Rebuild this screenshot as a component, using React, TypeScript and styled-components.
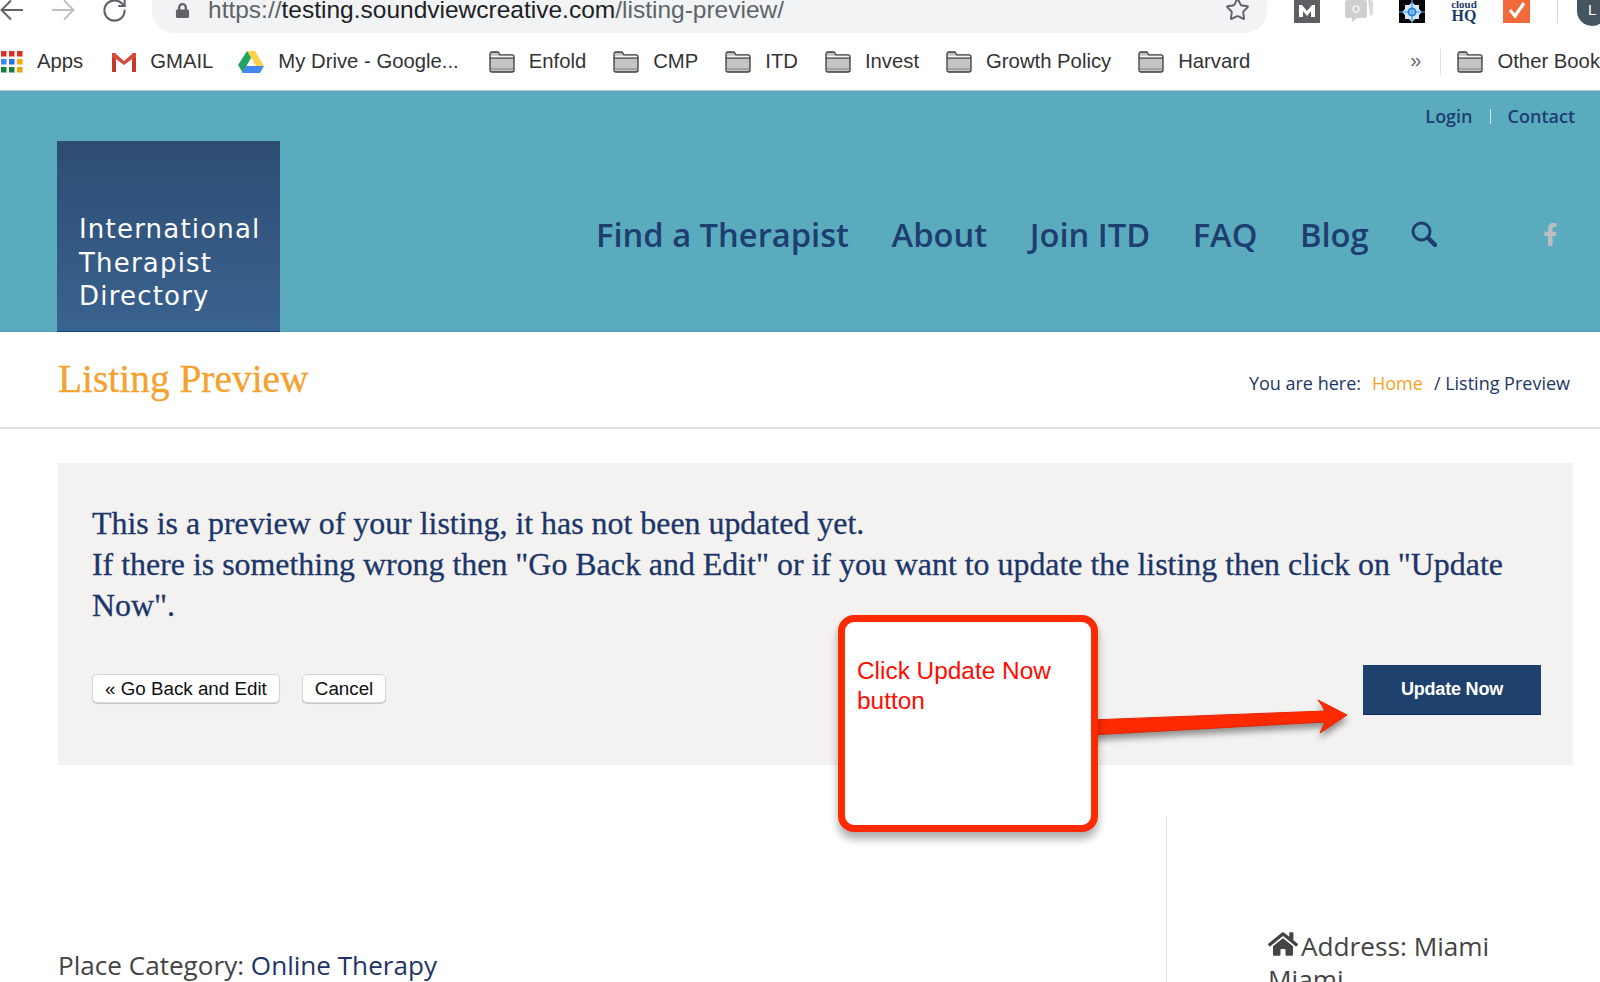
import React from 'react';
import styled, { createGlobalStyle } from 'styled-components';
import { RotateCw, Star } from 'lucide-react';
import { FaHome, FaFacebookF, FaLock } from 'react-icons/fa';

const Global = createGlobalStyle`
  html, body { margin: 0; padding: 0; background: #fff; height: 982px; overflow: hidden; }
  * { box-sizing: border-box; }
`;
const Page = styled.div`
  position: relative; width: 1600px; height: 982px; overflow: hidden; background: #fff;
  font-family: "Open Sans", sans-serif;
`;
const Toolbar = styled.div`
  height: 33px; display: flex; align-items: flex-end; overflow: hidden; position: relative;
`;
const NavIcons = styled.div`
  width: 152px; height: 33px; padding: 0 0 13px 0; display: flex; align-items: center; gap: 29px; color: #5f6368; flex: none;
  svg { flex: none; }
`;
const Pill = styled.div`
  width: 1115px; height: 44px; background: #f1f3f4; border-radius: 0 0 22px 22px; flex: none;
  display: flex; align-items: flex-end; padding: 0 17px 10px 23px; color: #5f6368;
  font-family: "Liberation Sans", sans-serif; font-size: 24.5px; line-height: 27px;
`;
const UrlText = styled.div`
  margin-left: 18px; flex: 1; white-space: nowrap; color: #5f6368;
  b { font-weight: 400; color: #202124; }
`;
const Extensions = styled.div`
  display: flex; align-items: flex-start; height: 33px; margin-left: 27px; padding-top: 0; flex: none;
`;
const ExtSlot = styled.div<{ $w: number }>`
  width: ${p => p.$w}px; flex: none; height: 24px; display: flex; align-items: flex-start;
`;
const CloudHq = styled.div`
  font-family: "Liberation Serif", serif; font-weight: 700; color: #1b3a66; text-align: center; width: 28px;
  font-size: 11px; line-height: 8px;
  span { display: block; font-size: 16px; line-height: 15px; }
`;
const ToolSep = styled.div`
  width: 1px; height: 23px; background: #d5d5d5; flex: none; margin-right: 19px;
`;
const Avatar = styled.div`
  width: 30px; height: 26px; border-radius: 0 0 15px 15px; background: #46555f; color: #fff; flex: none;
  font-size: 15px; padding-left: 11px; line-height: 20px; font-family: "Liberation Sans", sans-serif;
`;
const Bookmarks = styled.div`
  height: 58px; display: flex; align-items: center; gap: 27px; padding-left: 1px; overflow: hidden; white-space: nowrap;
  border-bottom: 1px solid #b9c3c6;
  font-family: "Liberation Sans", sans-serif; font-size: 20.3px; color: #333; position: relative;
`;
const Bookmark = styled.div`
  display: flex; align-items: center; gap: 14px; flex: none;
`;
const GmailMark = styled(Bookmark)`
  margin: 0 -2px 0 2px;
`;
const DriveMark = styled(Bookmark)`
  margin-right: 3px;
`;
const BookmarkEnd = styled.div`
  margin-left: 133px; display: flex; align-items: center; flex: none; gap: 27px;
`;
const Chevrons = styled.span`
  color: #666; font-size: 20px; margin-top: -2px;
`;
const BarSep = styled.div`
  width: 1px; height: 26px; background: #e0e0e0; margin-left: -8px; margin-right: -11px;
`;
const Header = styled.header`
  height: 241px; background: #5babbf; display: flex; padding-left: 57px;
  border-bottom: 1px solid #55a1b4;
`;
const Logo = styled.div`
  width: 223px; height: 191px; margin-top: 50px; flex: none;
  background: linear-gradient(#2d4d72, #3a6290); border-bottom: 1px solid #11477e;
  padding: 72px 0 0 22px; color: #fff;
  font-family: "DejaVu Sans", sans-serif; font-size: 26px; line-height: 33.6px; letter-spacing: 1.2px;
`;
const HeaderRight = styled.div`
  flex: 1; display: flex; flex-direction: column;
`;
const TopLinks = styled.div`
  height: 50px; display: flex; align-items: center; justify-content: flex-end; padding-right: 25px;
  color: #1d3e6f; font-size: 18px; font-weight: 600; gap: 17px;
`;
const TopSep = styled.span`
  width: 1px; height: 15px; background: #d8e6ea;
`;
const Nav = styled.nav`
  height: 186px; display: flex; align-items: center; padding-left: 316px; gap: 42.5px;
  color: #1d3e6f; font-size: 32.7px; font-weight: 600; white-space: nowrap;
`;
const FbIcon = styled(FaFacebookF)`
  font-size: 23px; color: #b9bfc0; flex: none; margin-left: 59px;
`;
const TitleBar = styled.div`
  height: 97px; border-bottom: 2px solid #e4e4e4; display: flex; align-items: center; justify-content: space-between;
  padding: 0 30px 0 58px;
`;
const Title = styled.h1`
  margin: 0 0 2px; font-family: "Liberation Serif", serif; font-weight: 400; font-size: 39.4px; color: #f4a12e;
  -webkit-text-stroke: 0.3px #f4a12e;
`;
const Crumbs = styled.div`
  font-size: 18px; color: #1d3566; display: flex; gap: 11px; margin-top: 6px;
`;
const CrumbLink = styled.span`
  color: #f9a11f;
`;
const Notice = styled.section`
  margin: 34px 27px 0 58px; height: 302px; background: #f3f2f1; padding: 40px 32px 0 34px; position: relative;
`;
const NoticeText = styled.div`
  font-family: "Liberation Serif", serif; font-size: 31.9px; line-height: 41px; color: #1c3669;
  -webkit-text-stroke: 0.3px #1c3669;
`;
const NoticeActions = styled.div`
  display: flex; align-items: flex-start; margin-top: 48px;
`;
const SmallButton = styled.button`
  height: 29px; padding: 0 12px; background: #fff; border: 1px solid #d8d8d8; border-radius: 5px;
  box-shadow: 0 1px 1px rgba(0,0,0,.18); color: #111; font-family: "Liberation Sans", sans-serif; font-size: 18.8px;
  margin-right: 22px;
`;
const UpdateButton = styled.button`
  margin: -9px 0 0 auto; width: 178px; height: 50px; background: #1e406d; border: 0; border-bottom: 1px solid #0d2a66; color: #fff;
  font-family: "Liberation Sans", sans-serif; font-size: 18px; font-weight: 700; letter-spacing: -0.2px;
`;
const Lower = styled.div`
  display: grid; grid-template-columns: 1166px 1fr; margin-top: 51px; height: 200px;
`;
const LeftCol = styled.div`
  padding: 131px 0 0 58px; font-size: 26.1px; color: #444;
  a { color: #1d3566; }
`;
const RightCol = styled.div`
  border-left: 1px solid #dcdcdc; padding: 113px 100px 0 101px; font-size: 26.2px; line-height: 33px; color: #444; 
  svg { vertical-align: -3px; margin-right: 3px; }
`;
const Callout = styled.div`
  position: absolute; left: 838px; top: 615px; width: 260px; height: 217px; background: #fff; border: 7px solid #ff2a00;
  border-radius: 16px; box-shadow: 0 7px 8px rgba(0,0,0,.32); padding: 34px 10px 0 12px;
  color: #ff0c00; font-family: "Liberation Sans", sans-serif; font-size: 24.4px; line-height: 30px; z-index: 3;
`;
const ArrowSvg = styled.svg`
  position: absolute; left: 1090px; top: 690px; z-index: 2; overflow: visible;
  filter: drop-shadow(0 5px 3px rgba(0, 0, 0, 0.4));
`;
const ReloadIcon = styled(RotateCw)`
  margin-left: -3px;
`;

const Folder = () => (
  <svg width="26" height="22" viewBox="0 0 26 22">
    <path d="M1 3.5Q1 1 3 1h6l2 3h12q2 0 2 2v13q0 2-2 2H3q-2 0-2-2z" fill="#c4c4c4" stroke="#3c3c3c" strokeWidth="1.3" />
    <path d="M1 7h24" stroke="#3c3c3c" strokeWidth="1.3" />
    <path d="M2 5.5h22" stroke="#f5f5f5" strokeWidth="1.6" />
    <path d="M2 18h22" stroke="#999" strokeWidth="1.6" />
  </svg>
);
const BackArrow = () => (
  <svg width="23" height="22" viewBox="0 0 23 22" fill="none" stroke="currentColor" strokeWidth="2">
    <path d="M23 11H2M11 1.5 1.5 11l9.5 9.5" />
  </svg>
);
const ForwardArrow = () => (
  <svg width="23" height="22" viewBox="0 0 23 22" fill="none" stroke="#bdc1c6" strokeWidth="2">
    <path d="M0 11h21M12 1.5l9.5 9.5-9.5 9.5" />
  </svg>
);
const SearchGlyph = () => (
  <svg width="26" height="26" viewBox="0 0 26 26" fill="none" stroke="currentColor">
    <circle cx="10.5" cy="10.5" r="8.5" strokeWidth="3" />
    <path d="M17 17l7 7" strokeWidth="4.4" strokeLinecap="round" />
  </svg>
);
const AppsIcon = () => (
  <svg width="22" height="22" viewBox="0 0 22 22">
    {[['#d93025','#d93025','#d93025'],['#4285f4','#1a73e8','#f9ab00'],['#188038','#188038','#e8a317']].map((row, r) =>
      row.map((c, i) => <rect key={`${r}${i}`} x={i * 8} y={r * 8} width="5.5" height="5.5" fill={c} />))}
  </svg>
);
const GmailIcon = () => (
  <svg width="24" height="20" viewBox="0 0 24 20">
    <path d="M0 1h4v19H1q-1 0-1-1zM20 20V1h4v18q0 1-1 1z" fill="#c9c9c9" />
    <path d="M0 1h3l9 8 9-8h3v3L12 13 0 4z" fill="#d54c3f" />
    <path d="M0 4l4 3v13H1q-1 0-1-1zM24 4l-4 3v13h3q1 0 1-1z" fill="#c5392b" />
  </svg>
);
const DriveIcon = () => (
  <svg width="26" height="22" viewBox="0 0 26 22">
    <path d="M9 0h8L9 14 5 22 0 14z" fill="#1fa463" />
    <path d="M9 0h8l9 15h-8z" fill="#ffd04b" />
    <path d="M8 15h18l-4 7H4z" fill="#4687f4" />
  </svg>
);
const ExtM = () => (
  <svg width="26" height="23" viewBox="0 0 26 23">
    <rect width="26" height="23" fill="#5c6063" />
    <path d="M5 17V5h3l5 6 5-6h3v12h-4v-6l-4 5-4-5v6z" fill="#fff" />
  </svg>
);
const ExtChat = () => (
  <svg width="28" height="23" viewBox="0 0 28 23">
    <path d="M23 0h2q3 0 3 3v10q0 2-3 3z" fill="#d9d9d9" />
    <path d="M3 0h17q2 0 2 3v13q0 2-2 2h-8l-5 4v-4H3q-3 0-3-2V3q0-3 3-3z" fill="#cfcfcf" />
    <circle cx="11" cy="9" r="3" fill="none" stroke="#f2f2f2" strokeWidth="1.5" />
  </svg>
);
const ExtGear = () => (
  <svg width="26" height="23" viewBox="0 0 26 23">
    <rect width="26" height="23" fill="#060606" />
    <path d="M13 2l3 3h4v4l3 3-3 3v4h-4l-3 3-3-3H6v-4l-3-3 3-3V5h4z" fill="#cfe6fb" />
    <path d="M13 0v23M0 12h26" stroke="#3b9be8" strokeWidth="1.2" />
    <circle cx="13" cy="12" r="3.5" fill="none" stroke="#2b83d8" strokeWidth="2" />
  </svg>
);
const ExtCheck = () => (
  <svg width="27" height="23" viewBox="0 0 27 23">
    <rect width="27" height="23" fill="#f16a39" />
    <path d="M7 10l5 6L21 3" fill="none" stroke="#fff" strokeWidth="3.2" />
  </svg>
);

const folders = ['Enfold', 'CMP', 'ITD', 'Invest', 'Growth Policy', 'Harvard'];

export default function App() {
  return (
    <Page>
      <Global />
      <Toolbar>
        <NavIcons>
          <BackArrow />
          <ForwardArrow />
          <ReloadIcon size={27} strokeWidth={1.8} />
        </NavIcons>
        <Pill>
          <FaLock size={15} style={{ marginBottom: 5 }} />
          <UrlText>https://<b>testing.soundviewcreative.com</b>/listing-preview/</UrlText>
          <Star size={25} strokeWidth={1.8} style={{ marginBottom: 1 }} />
        </Pill>
        <Extensions>
          <ExtSlot $w={51}><ExtM /></ExtSlot>
          <ExtSlot $w={54}><ExtChat /></ExtSlot>
          <ExtSlot $w={51}><ExtGear /></ExtSlot>
          <ExtSlot $w={53}><CloudHq>cloud<span>HQ</span></CloudHq></ExtSlot>
          <ExtSlot $w={54}><ExtCheck /></ExtSlot>
          <ToolSep />
          <Avatar>L</Avatar>
        </Extensions>
      </Toolbar>
      <Bookmarks>
        <Bookmark><AppsIcon />Apps</Bookmark>
        <GmailMark><GmailIcon />GMAIL</GmailMark>
        <DriveMark><DriveIcon />My Drive - Google...</DriveMark>
        {folders.map(f => <Bookmark key={f}><Folder />{f}</Bookmark>)}
        <BookmarkEnd>
          <Chevrons>»</Chevrons>
          <BarSep />
          <Bookmark><Folder />Other Bookmarks</Bookmark>
        </BookmarkEnd>
      </Bookmarks>
      <Header>
        <Logo>International<br />Therapist<br />Directory</Logo>
        <HeaderRight>
          <TopLinks><span>Login</span><TopSep /><span>Contact</span></TopLinks>
          <Nav>
            <span>Find a Therapist</span>
            <span>About</span>
            <span>Join ITD</span>
            <span>FAQ</span>
            <span>Blog</span>
            <SearchGlyph />
            <FbIcon />
          </Nav>
        </HeaderRight>
      </Header>
      <TitleBar>
        <Title>Listing Preview</Title>
        <Crumbs>
          <span>You are here:</span>
          <CrumbLink>Home</CrumbLink>
          <span>/ Listing Preview</span>
        </Crumbs>
      </TitleBar>
      <Notice>
        <NoticeText>
          This is a preview of your listing, it has not been updated yet.<br />
          If there is something wrong then "Go Back and Edit" or if you want to update the listing then click on "Update Now".
        </NoticeText>
        <NoticeActions>
          <SmallButton>« Go Back and Edit</SmallButton>
          <SmallButton>Cancel</SmallButton>
          <UpdateButton>Update Now</UpdateButton>
        </NoticeActions>
      </Notice>
      <Lower>
        <LeftCol>Place Category: <a>Online Therapy</a></LeftCol>
        <RightCol><FaHome size={30} />Address: Miami Miami</RightCol>
      </Lower>
      <ArrowSvg width="270" height="60" viewBox="0 0 270 60">
        <path d="M0 30 L235 21 Q232 15 228 10 L257 25 L230 43 Q233 37 235 32 L0 45 Z" fill="#ff2a00" stroke="#e02500" strokeWidth="1" strokeLinejoin="round" />
      </ArrowSvg>
      <Callout>Click Update Now<br />button</Callout>
    </Page>
  );
}
